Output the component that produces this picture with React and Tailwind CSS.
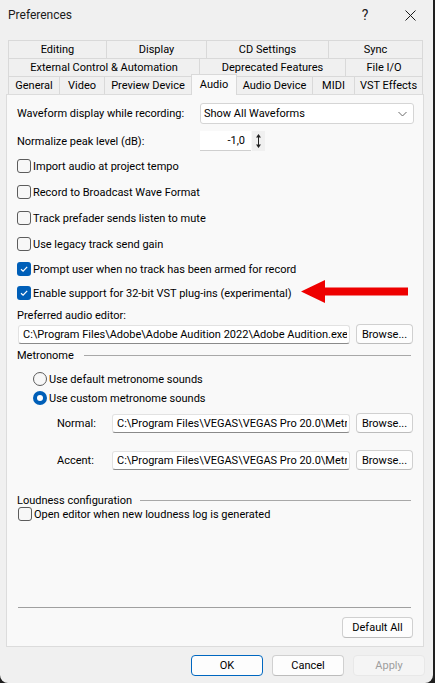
import React from "react";

function Check({ checked }) {
  if (checked) {
    return (
      <span className="w-[14px] h-[14px] rounded-[3px] bg-[#005fb8] flex items-center justify-center shrink-0">
        <svg width="10" height="10" viewBox="0 0 10 10">
          <path d="M2 5.2 L4.1 7.2 L8.2 2.8" fill="none" stroke="white" strokeWidth="1.2" />
        </svg>
      </span>
    );
  }
  return <span className="w-[14px] h-[14px] rounded-[3px] border border-[#5c5c5c] bg-[#f7f7f7] shrink-0" />;
}

function Radio({ checked }) {
  if (checked) {
    return (
      <span className="w-[14px] h-[14px] rounded-full bg-[#005fb8] flex items-center justify-center shrink-0">
        <span className="w-[6px] h-[6px] rounded-full bg-white" />
      </span>
    );
  }
  return <span className="w-[14px] h-[14px] rounded-full border border-[#5c5c5c] bg-[#f7f7f7] shrink-0" />;
}

function CheckRow({ checked, label, h }) {
  return (
    <div className={"flex items-center gap-[2px] " + h}>
      <Check checked={checked} />
      <span>{label}</span>
    </div>
  );
}

function Btn({ children, className }) {
  return (
    <div
      className={
        "shrink-0 flex items-center justify-center rounded-[4px] border border-[#d0d0d0] border-b-[#bcbcbc] bg-[#fdfdfd] " +
        className
      }
    >
      {children}
    </div>
  );
}

function Field({ children, className }) {
  return (
    <div
      className={
        "shrink-0 flex items-center rounded-[3px] border border-[#e2e2e2] border-b-[#8a8a8a] bg-white pl-[4px] pr-[2px] " +
        className
      }
    >
      <span className="block min-w-0 flex-1 overflow-hidden whitespace-nowrap leading-[15px]">{children}</span>
    </div>
  );
}

function Tab({ children, w, last }) {
  return (
    <div
      className={
        "flex items-center justify-center border-t border-l border-[#d9d9d9] h-[18px] " +
        (last ? "border-r " : "") +
        w
      }
    >
      {children}
    </div>
  );
}

export default function App() {
  return (
    <div className="w-[435px] h-[683px] bg-[#1f1f1f] font-['Roboto',sans-serif] text-[11px] leading-none text-black">
      <div className="w-[433px] h-[683px] bg-[#f0f0f0] rounded-b-[8px] flex flex-col">
        {/* Title bar */}
        <div className="h-[30px] flex items-center justify-between pl-[8px]">
          <span className="text-[12px] text-[#1a1a1a]">Preferences</span>
          <div className="flex items-center">
            <div className="w-[46px] h-[30px] flex items-center justify-center text-[14px] text-[#1a1a1a]">?</div>
            <div className="w-[45px] h-[30px] flex items-center justify-center">
              <svg width="11" height="11" viewBox="0 0 11 11">
                <path d="M0.5 0.5 L10.5 10.5 M10.5 0.5 L0.5 10.5" stroke="#1a1a1a" strokeWidth="1" />
              </svg>
            </div>
          </div>
        </div>

        {/* Tabs */}
        <div className="mt-[10px] ml-[8px] w-[415px] flex flex-col">
          <div className="flex">
            <Tab w="w-[98px]">Editing</Tab>
            <Tab w="w-[100px]">Display</Tab>
            <Tab w="w-[122px]">CD Settings</Tab>
            <Tab w="w-[95px]" last>Sync</Tab>
          </div>
          <div className="flex">
            <Tab w="w-[191px]">External Control &amp; Automation</Tab>
            <Tab w="w-[146px]">Deprecated Features</Tab>
            <Tab w="w-[78px]" last>File I/O</Tab>
          </div>
          <div className="flex items-start h-[18px]">
            <Tab w="w-[51px]">General</Tab>
            <Tab w="w-[45px]">Video</Tab>
            <Tab w="w-[87px]">Preview Device</Tab>
            <div className="relative z-10 -mt-[2px] h-[21px] w-[46px] bg-[#f9f9f9] border-t border-l border-r border-[#d9d9d9] flex items-start justify-center pt-[4px]">
              Audio
            </div>
            <div className="flex items-center justify-center border-t border-[#d9d9d9] h-[18px] w-[75px]">Audio Device</div>
            <Tab w="w-[42px]">MIDI</Tab>
            <Tab w="w-[69px]" last>VST Effects</Tab>
          </div>
        </div>

        {/* Panel */}
        <div className="ml-[6px] w-[418px] h-[553px] border border-[#dcdcdc] bg-[#f9f9f9] flex flex-col pl-[10px]">
          <div className="mt-[8px] flex items-center h-[21px]">
            <span className="w-[183px]">Waveform display while recording:</span>
            <div className="w-[214px] h-[21px] bg-white border border-[#d5d5d5] rounded-[3px] flex items-center justify-between pl-[3px] pr-[6px]">
              <span>Show All Waveforms</span>
              <svg width="9" height="6" viewBox="0 0 9 6">
                <path d="M0.5 1 L4.5 5 L8.5 1" fill="none" stroke="#6a6a6a" strokeWidth="1" />
              </svg>
            </div>
          </div>

          <div className="mt-[7px] flex items-center h-[20px]">
            <span className="w-[183px]">Normalize peak level (dB):</span>
            <div className="w-[51px] h-[20px] bg-white border-b border-[#cfcfcf] flex items-center justify-end pr-[6px]">
              -1,0
            </div>
            <div className="w-[13px] h-[20px] bg-[#f0f0f0] ml-[1px] flex items-center justify-center">
              <svg width="7" height="16" viewBox="0 0 7 16">
                <path d="M3.5 2 L3.5 14" stroke="#222" strokeWidth="1" />
                <path d="M1 4.5 L3.5 1 L6 4.5 Z M1 11.5 L3.5 15 L6 11.5 Z" fill="#222" />
              </svg>
            </div>
          </div>

          <div className="mt-[2px]">
            <CheckRow h="h-[26px]" label="Import audio at project tempo" />
            <CheckRow h="h-[26px]" label="Record to Broadcast Wave Format" />
            <CheckRow h="h-[26px]" label="Track prefader sends listen to mute" />
            <CheckRow h="h-[26px]" label="Use legacy track send gain" />
            <CheckRow h="h-[24px]" checked label="Prompt user when no track has been armed for record" />
            <div className="relative">
              <CheckRow h="h-[24px]" checked label="Enable support for 32-bit VST plug-ins (experimental)" />
              <svg
                className="absolute left-[284px] top-[-1px]"
                width="107"
                height="23"
                viewBox="0 0 107 23"
              >
                <path d="M0 11.5 L24 0 L24 7.5 L107 7.5 L107 15.5 L24 15.5 L24 23 Z" fill="#ee0000" />
              </svg>
            </div>
          </div>

          <div className="mt-[1px] h-[18px] flex items-center">Preferred audio editor:</div>
          <div className="h-[20px] flex items-center">
            <Field className="ml-[1px] w-[332px] h-[19px]">
              C:\Program Files\Adobe\Adobe Audition 2022\Adobe Audition.exe
            </Field>
            <Btn className="ml-[6px] w-[57px] h-[20px]">Browse...</Btn>
          </div>

          <div className="mt-[2px] h-[18px] flex items-center">
            <span>Metronome</span>
            <div className="ml-[10px] mr-[12px] flex-1 h-px bg-[#a8a8a8]" />
          </div>

          <div className="mt-[6px] h-[18px] flex items-center gap-[2px] pl-[16px]">
            <Radio />
            <span>Use default metronome sounds</span>
          </div>
          <div className="mt-[1px] h-[18px] flex items-center gap-[2px] pl-[16px]">
            <Radio checked />
            <span>Use custom metronome sounds</span>
          </div>

          <div className="mt-[6px] h-[20px] flex items-center pl-[40px]">
            <span className="w-[55px]">Normal:</span>
            <Field className="w-[238px] h-[19px]">C:\Program Files\VEGAS\VEGAS Pro 20.0\Metronome\Normal.wav</Field>
            <Btn className="ml-[6px] w-[57px] h-[20px]">Browse...</Btn>
          </div>
          <div className="mt-[17px] h-[20px] flex items-center pl-[40px]">
            <span className="w-[55px]">Accent:</span>
            <Field className="w-[238px] h-[19px]">C:\Program Files\VEGAS\VEGAS Pro 20.0\Metronome\Accent.wav</Field>
            <Btn className="ml-[6px] w-[57px] h-[20px]">Browse...</Btn>
          </div>

          <div className="mt-[23px] h-[14px] flex items-center">
            <span>Loudness configuration</span>
            <div className="ml-[8px] mr-[12px] flex-1 h-px bg-[#a8a8a8]" />
          </div>
          <div className="h-[14px] flex items-center gap-[2px] ml-[1px]">
            <Check />
            <span>Open editor when new loudness log is generated</span>
          </div>

          <div className="flex-1" />
          <div className="h-px bg-[#a0a0a0] ml-[1px] mr-[12px]" />
          <Btn className="mt-[9px] self-end mr-[10px] w-[71px] h-[21px] mb-[8px]">Default All</Btn>
        </div>

        {/* Bottom buttons */}
        <div className="mt-[8px] flex justify-end gap-[9px] pr-[8px]">
          <div className="w-[72px] h-[21px] rounded-[4px] border border-[#0067c0] bg-[#fdfdfd] flex items-center justify-center">
            OK
          </div>
          <Btn className="w-[72px] h-[21px]">Cancel</Btn>
          <div className="w-[72px] h-[21px] rounded-[4px] border border-[#e8e8e8] bg-[#f5f5f5] text-[#9d9d9d] flex items-center justify-center">
            Apply
          </div>
        </div>
      </div>
    </div>
  );
}
